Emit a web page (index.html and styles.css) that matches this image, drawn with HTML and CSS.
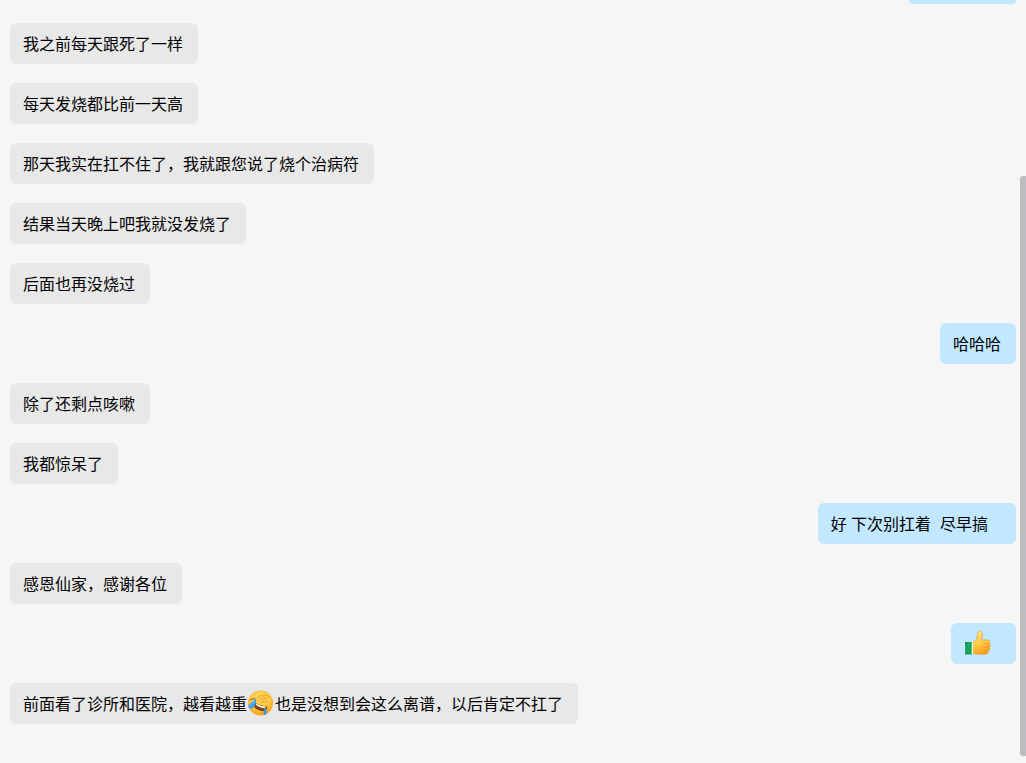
FILE: index.html
```html
<!DOCTYPE html>
<html lang="zh-CN">
<head>
  <meta charset="UTF-8">
  <meta name="viewport" content="width=device-width, initial-scale=1.0">
  <title>聊天记录</title>
  <link rel="stylesheet" href="styles.css">
</head>
<body>
  <main class="chat">
    <div class="bubble mine cut"></div>
    <div class="bubble">我之前每天跟死了一样</div>
    <div class="bubble">每天发烧都比前一天高</div>
    <div class="bubble">那天我实在扛不住了，我就跟您说了烧个治病符</div>
    <div class="bubble">结果当天晚上吧我就没发烧了</div>
    <div class="bubble">后面也再没烧过</div>
    <div class="bubble mine">哈哈哈</div>
    <div class="bubble">除了还剩点咳嗽</div>
    <div class="bubble">我都惊呆了</div>
    <div class="bubble mine wide">好 下次别扛着  尽早搞</div>
    <div class="bubble">感恩仙家，感谢各位</div>
    <div class="bubble mine picture"><svg class="emoji" viewBox="0 0 28 28" role="img" aria-label="赞">
      <defs>
        <linearGradient id="hand" x1="0" y1="0" x2="0.3" y2="1">
          <stop offset="0" stop-color="#ffe48a"/>
          <stop offset="0.6" stop-color="#ffcd48"/>
          <stop offset="1" stop-color="#f8a01f"/>
        </linearGradient>
        <linearGradient id="cuff" x1="0" y1="0" x2="1" y2="0">
          <stop offset="0" stop-color="#03854a"/>
          <stop offset="0.5" stop-color="#19ad62"/>
          <stop offset="1" stop-color="#079150"/>
        </linearGradient>
      </defs>
      <path d="M9 13.500C11 12 13 9.500 13.500 7L13.600 4.300C13.700 1.700 16.500 1.300 17.700 3.600C18.800 5.800 18.200 8.500 17.400 11H23.500C25.900 11.200 26.400 13.300 25.200 14.500C26.800 15.500 26.600 17.600 25.300 18.300C26.200 19.700 25.600 21.300 24.300 21.700C24.700 23.500 23.500 24.900 21.700 25.200H13.500C11.500 25.200 10.500 24.700 9 24.500Z" fill="url(#hand)" stroke="#e99a2d" stroke-width="0.7"/>
      <path d="M19.500 14.600H24.600M20 18.200H24.800M20 21.600H24" fill="none" stroke="#e39a25" stroke-width="0.7" stroke-linecap="round"/>
      <path d="M14.800 4.500C15 3.500 16.200 3.400 16.700 4.600" fill="none" stroke="#fff2ac" stroke-width="1" stroke-linecap="round"/>
      <rect x="1" y="13" width="7.500" height="12.500" rx="0.700" fill="url(#cuff)"/>
      <path d="M1.800 15V24" stroke="#4bc488" stroke-width="0.800"/>
      <rect x="7.600" y="13.300" width="1.600" height="12" fill="#e8f6d5"/>
    </svg></div>
    <div class="bubble">前面看了诊所和医院，越看越重<svg class="emoji" viewBox="0 0 28 28" role="img" aria-label="捂脸">
      <defs>
        <radialGradient id="face" cx="0.45" cy="0.3" r="0.75">
          <stop offset="0" stop-color="#ffdc6a"/>
          <stop offset="0.65" stop-color="#ffc331"/>
          <stop offset="1" stop-color="#f5921b"/>
        </radialGradient>
      </defs>
      <circle cx="13.500" cy="14" r="12.300" fill="url(#face)" stroke="#f2a32c" stroke-width="0.500"/>
      <path d="M8.500 13.500C11 15.500 15.500 17 20 17.500C20.500 19.500 19.500 21.500 17 22C13.500 22.300 8.500 20.500 7 17.500Z" fill="#7a4014"/>
      <path d="M9.500 14.300C12 16 15.500 17.200 19 17.700L18.300 19.300C14.500 19 11 17.800 9 16Z" fill="#fff0d2"/>
      <path d="M9 10C10.500 6.500 14.500 5 18.500 5.700C22.500 6 24.500 9.500 23 13C21 16.500 16 17 12.500 14.800C10 13.500 8.700 12 9 10Z" fill="#ffcb4a"/>
      <path d="M10 8.500C12 6.700 14.500 6.300 16.500 7M13.500 10.800C15.500 9.300 17.500 9 19.500 9.500M14.500 13.300C16.500 12 18.500 11.900 20.500 12.700M17 6.300C19 6 21 6.700 22 8" fill="none" stroke="#dc9428" stroke-width="0.700" stroke-linecap="round"/>
      <path d="M3 11.500C4.200 9.700 6 9.200 8 10" fill="none" stroke="#8b5218" stroke-width="1" stroke-linecap="round"/>
      <path d="M8.700 9.800C10.200 12.500 8.200 17.500 4.800 19.700C2.800 20.300 1 18.500 1.500 16.500C3 14.500 6 12.500 8.700 9.800Z" fill="#399de9"/>
      <path d="M3 17C4.800 15.800 6.200 14.300 7.500 12.500" fill="none" stroke="#79c5f7" stroke-width="0.900" stroke-linecap="round"/>
      <path d="M17 19.500C18.300 19 19.300 20 19.500 21.500L19.300 25C18.300 26.500 16.700 26.200 16.500 24.500Z" fill="#3293e8"/>
    </svg>也是没想到会这么离谱，以后肯定不扛了</div>
    <div class="scroll-thumb"></div>
  </main>
</body>
</html>
```
FILE: styles.css
```css
body {
    margin: 0;
    background-color: #f6f6f6;
    color: #000;
    font-family: "Liberation Sans", "Noto Sans CJK SC", sans-serif;
    font-size: 16px;
}

.chat {
    position: relative;
    display: flex;
    flex-direction: column;
    align-items: flex-start;
    gap: 19px;
    box-sizing: border-box;
    min-height: 100vh;
    padding: 0 10px 39px;
}

.bubble {
    box-sizing: border-box;
    min-height: 41px;
    padding: 9px 15px 7px 13px;
    border-radius: 6px;
    background-color: #e8e8e8;
    line-height: 25px;
    white-space: pre-wrap;
}

.mine {
    align-self: flex-end;
    background-color: #c2e8ff;
}

.wide {
    padding-right: 28px;
}

.picture {
    padding-right: 24px;
}

/* message scrolled past the top edge */
.cut {
    width: 107px;
    height: 4px;
    min-height: 0;
    padding: 0;
    border-radius: 0 0 6px 6px;
}

.emoji {
    display: inline-block;
    width: 28px;
    height: 28px;
    margin: -7px 0 -1px;
    vertical-align: middle;
}

.scroll-thumb {
    position: absolute;
    top: 176px;
    right: 0;
    bottom: 7px;
    width: 6px;
    border-radius: 3px 0 0 3px;
    background-color: #bdbdc1;
}
```
